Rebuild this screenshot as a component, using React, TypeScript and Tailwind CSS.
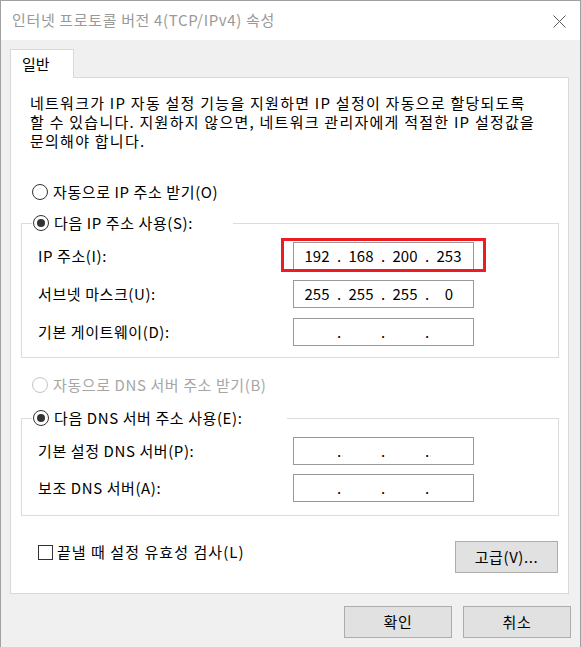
const font = "font-['Noto_Sans_CJK_KR','Noto_Sans',sans-serif]";

const Radio = ({ checked, disabled }: { checked?: boolean; disabled?: boolean }) => {
  return (
    <span
      className={
        disabled
          ? "flex size-[16px] shrink-0 items-center justify-center rounded-full border border-[#c4c4c4] bg-white"
          : "flex size-[16px] shrink-0 items-center justify-center rounded-full border border-[#333333] bg-white"
      }
    >
      {checked && <span className="size-[8px] rounded-full bg-[#333333]" />}
    </span>
  );
};

const RadioRow = ({
  label,
  checked,
  disabled,
}: {
  label: string;
  checked?: boolean;
  disabled?: boolean;
}) => {
  return (
    <div className="flex h-[20px] items-center gap-[5px]">
      <Radio checked={checked} disabled={disabled} />
      <span
        className={
          disabled
            ? "whitespace-nowrap text-[#a6a6a6]"
            : "whitespace-nowrap text-black"
        }
      >
        {label}
      </span>
    </div>
  );
};

const IpInput = ({ parts }: { parts: string[] }) => {
  return (
    <div className="flex h-[28px] w-[181px] items-center border border-[#999999] bg-white pl-[3px] tracking-normal">
      {parts.map((p, i) => (
        <div key={i} className="flex items-center">
          {i > 0 && <span className="w-[4px] text-center">.</span>}
          <span className="w-[40px] text-center">{p}</span>
        </div>
      ))}
    </div>
  );
};

const FieldRow = ({
  label,
  parts,
  highlight,
}: {
  label: string;
  parts: string[];
  highlight?: boolean;
}) => {
  return (
    <div className="flex h-[28px] items-center">
      <span className="w-[255px] whitespace-nowrap">{label}</span>
      <div className="relative">
        <IpInput parts={parts} />
        {highlight && (
          <div className="absolute -top-[4px] -right-[12px] -bottom-[2px] -left-[12px] border-[3px] border-[#ed1c24]" />
        )}
      </div>
    </div>
  );
};

const Group = ({
  legend,
  legendWidth,
  className,
  children,
}: {
  legend: string;
  legendWidth: string;
  className: string;
  children: React.ReactNode;
}) => {
  return (
    <fieldset
      className={`ml-[10px] w-[538px] border border-[#dcdcdc] pl-[16px] ${className}`}
    >
      <legend className={`ml-[-6px] pl-[1px] ${legendWidth} bg-white`}>
        <RadioRow label={legend} checked />
      </legend>
      <div className="flex flex-col">{children}</div>
    </fieldset>
  );
};

const Button = ({ label, className }: { label: string; className: string }) => {
  return (
    <button
      className={`flex h-[32px] items-center justify-center border border-[#adadad] bg-[#e1e1e1] text-black ${className}`}
    >
      {label}
    </button>
  );
};

export default function App() {
  return (
    <div
      className={`${font} flex h-[647px] w-[581px] flex-col overflow-hidden border-x border-t border-[#a0a0a0] bg-[#f0f0f0] text-[15px] tracking-[0.6px] text-black`}
    >
      {/* title bar */}
      <div className="flex h-[39px] shrink-0 items-center justify-between bg-white pr-[14px] pl-[11px]">
        <span className="text-[15px] tracking-[0.65px] text-[#999999]">
          인터넷 프로토콜 버전 4(TCP/IPv4) 속성
        </span>
        <svg width="13" height="13" viewBox="0 0 13 13" className="mt-[1px]">
          <path d="M0.5 0.5 L12.5 12.5 M12.5 0.5 L0.5 12.5" stroke="#555555" strokeWidth="1" />
        </svg>
      </div>

      {/* body */}
      <div className="flex flex-col pt-[9px] pl-[9px]">
        <div className="relative z-10 -mb-px flex h-[29px] w-[64px] items-center border-x border-t border-[#d9d9d9] bg-white pl-[11px] tracking-normal">
          일반
        </div>

        <div className="flex h-[517px] w-[559px] flex-col border border-[#d9d9d9] bg-white">
          <p className="pt-[15px] pl-[19px] leading-[19px] tracking-[1.25px] whitespace-nowrap">
            네트워크가 IP 자동 설정 기능을 지원하면 IP 설정이 자동으로 할당되도록
            <br />할 수 있습니다. 지원하지 않으면, 네트워크 관리자에게 적절한 IP 설정값을
            <br />문의해야 합니다.
          </p>

          <div className="mt-[32px] pl-[21px]">
            <RadioRow label="자동으로 IP 주소 받기(O)" />
          </div>

          <Group legend="다음 IP 주소 사용(S):" legendWidth="w-[201px]" className="mt-[11px] pt-[9px] pb-[11px]">
            <div className="flex flex-col gap-[10px]">
              <FieldRow label="IP 주소(I):" parts={["192", "168", "200", "253"]} highlight />
              <FieldRow label="서브넷 마스크(U):" parts={["255", "255", "255", "0"]} />
              <FieldRow label="기본 게이트웨이(D):" parts={["", "", "", ""]} />
            </div>
          </Group>

          <div className="mt-[17px] pl-[21px]">
            <RadioRow label="자동으로 DNS 서버 주소 받기(B)" disabled />
          </div>

          <Group legend="다음 DNS 서버 주소 사용(E):" legendWidth="w-[255px]" className="mt-[13px] pt-[9px] pb-[13px]">
            <div className="flex flex-col gap-[9px]">
              <FieldRow label="기본 설정 DNS 서버(P):" parts={["", "", "", ""]} />
              <FieldRow label="보조 DNS 서버(A):" parts={["", "", "", ""]} />
            </div>
          </Group>

          <div className="mt-[25px] flex items-center justify-between pr-[10px] pl-[27px]">
            <label className="mb-[10px] flex items-center gap-[4px]">
              <span className="size-[15px] border border-[#333333] bg-white" />
              <span className="whitespace-nowrap tracking-[1.05px]">끝낼 때 설정 유효성 검사(L)</span>
            </label>
            <Button label="고급(V)..." className="w-[103px]" />
          </div>
        </div>

        <div className="mt-[12px] flex justify-end gap-[11px] pr-[9px]">
          <Button label="확인" className="w-[108px]" />
          <Button label="취소" className="w-[108px]" />
        </div>
      </div>
    </div>
  );
}
